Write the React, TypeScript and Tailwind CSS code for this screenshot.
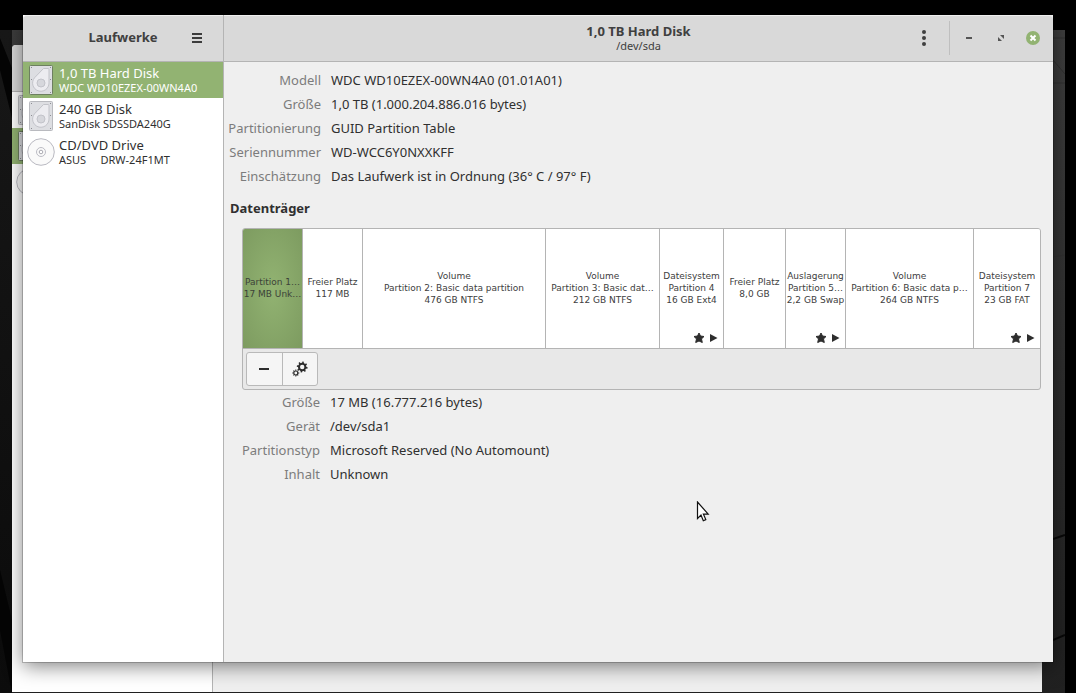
import React from 'react';

interface Drive {
  name: string;
  model: string;
  kind: 'disk' | 'optical';
}

interface Volume {
  size: number;
  lines: string[];
  mounted?: boolean;
}

const drives: Drive[] = [
  { name: '1,0 TB Hard Disk', model: 'WDC WD10EZEX-00WN4A0', kind: 'disk' },
  { name: '240 GB Disk', model: 'SanDisk SDSSDA240G', kind: 'disk' },
  { name: 'CD/DVD Drive', model: 'ASUS     DRW-24F1MT', kind: 'optical' },
];

const driveInfo: [string, string][] = [
  ['Modell', 'WDC WD10EZEX-00WN4A0 (01.01A01)'],
  ['Größe', '1,0 TB (1.000.204.886.016 bytes)'],
  ['Partitionierung', 'GUID Partition Table'],
  ['Seriennummer', 'WD-WCC6Y0NXXKFF'],
  ['Einschätzung', 'Das Laufwerk ist in Ordnung (36° C / 97° F)'],
];

const volumeInfo: [string, string][] = [
  ['Größe', '17 MB (16.777.216 bytes)'],
  ['Gerät', '/dev/sda1'],
  ['Partitionstyp', 'Microsoft Reserved (No Automount)'],
  ['Inhalt', 'Unknown'],
];

// size is the relative width of the volume in the grid
const volumes: Volume[] = [
  { size: 60, lines: ['Partition 1…', '17 MB Unk…'] },
  { size: 60, lines: ['Freier Platz', '117 MB'] },
  { size: 183, lines: ['Volume', 'Partition 2: Basic data partition', '476 GB NTFS'] },
  { size: 114, lines: ['Volume', 'Partition 3: Basic dat…', '212 GB NTFS'] },
  { size: 64, lines: ['Dateisystem', 'Partition 4', '16 GB Ext4'], mounted: true },
  { size: 62, lines: ['Freier Platz', '8,0 GB'] },
  { size: 60, lines: ['Auslagerung', 'Partition 5…', '2,2 GB Swap'], mounted: true },
  { size: 128, lines: ['Volume', 'Partition 6: Basic data p…', '264 GB NTFS'] },
  { size: 66, lines: ['Dateisystem', 'Partition 7', '23 GB FAT'], mounted: true },
];

const DiskIcon: React.FC<{ selected?: boolean }> = ({ selected }) => (
  <svg width="28" height="32" viewBox="0 0 28 32" className="shrink-0" aria-hidden="true">
    <rect x="2.5" y="1.5" width="23" height="29" rx="1" fill="#dddee2" stroke={selected ? '#6d7f60' : '#b9babf'} />
    <path
      d="M16.500 4.500h4.500q1 0 1 1V19a8.200 8.200 0 1 1-14.500-5.200z"
      fill="#ececf0"
      stroke="#c2c3c9"
      strokeLinejoin="round"
    />
    <circle cx="14" cy="19" r="4" fill="#d6d7dc" stroke="#c2c3c9" />
    <path d="M4 3h1v1H4zM23 3h1v1h-1zM4 15h1v1H4zM23 15h1v1h-1zM4 28h1v1H4zM23 28h1v1h-1z" fill="#8d8e94" />
  </svg>
);

const OpticalIcon: React.FC = () => (
  <svg width="28" height="28" viewBox="0 0 28 28" className="shrink-0" aria-hidden="true">
    <circle cx="14" cy="14" r="13.300" fill="#fafafa" stroke="#b9b9c1" />
    <circle cx="14" cy="14" r="4.500" fill="none" stroke="#bcbcc4" />
    <circle cx="14" cy="14" r="1.800" fill="#fff" stroke="#aaaab2" />
  </svg>
);

const gearTeeth = [0, 45, 90, 135, 180, 225, 270, 315];

const GearsIcon: React.FC = () => (
  <svg width="16" height="16" viewBox="0 0 16 16" stroke="#2d2d2d" fill="none" aria-hidden="true">
    <circle cx="10.200" cy="6" r="3.200" strokeWidth="2" />
    <circle cx="3.800" cy="12" r="2" strokeWidth="1.200" />
    {gearTeeth.map((a) => (
      <g key={a}>
        <path d="M10.200 2.500V.6" strokeWidth="1.600" transform={`rotate(${a + 10} 10.200 6)`} />
        <path d="M3.800 9.800V8.500" strokeWidth="1" transform={`rotate(${a} 3.800 12)`} />
      </g>
    ))}
  </svg>
);

const MountedIcons: React.FC = () => (
  <svg width="26" height="12" viewBox="0 0 26 12" fill="#2d2d2d" className="absolute right-1 bottom-1" aria-hidden="true">
    <path
      d="M6 1l1.500 3 3.500.5-2.500 2.400.8 3.600L6 9l-3.300 1.500.8-3.600L1 4.500 4.500 4z"
      stroke="#2d2d2d"
      strokeLinejoin="round"
    />
    <path d="M17 2l7.500 4-7.500 4z" />
  </svg>
);

const InfoList: React.FC<{ rows: [string, string][]; narrow?: boolean }> = ({ rows, narrow }) => (
  <dl
    className={
      narrow
        ? 'ml-3 grid grid-cols-[78px_1fr] gap-x-[10px] text-[13px] leading-6'
        : 'grid grid-cols-[91px_1fr] gap-x-[10px] text-[13px] leading-6'
    }
  >
    {rows.map(([label, value]) => (
      <React.Fragment key={label}>
        <dt className="flex justify-end whitespace-nowrap text-[#7c7c7c]">{label}</dt>
        <dd className="whitespace-nowrap">{value}</dd>
      </React.Fragment>
    ))}
  </dl>
);

// The second window, only its edges look out from behind the main one
const BackWindow: React.FC = () => (
  <div className="absolute top-[45px] right-[34px] bottom-px left-3 flex flex-col overflow-hidden rounded-t bg-[#efefef]">
    <div className="h-[47px] border-b border-[#b4b4b4] bg-[#d9d9d9]" />
    <div className="flex grow">
      <div className="w-[201px] border-r border-[#b4b4b4] bg-white">
        <div className="flex h-9 items-center pl-1">
          <DiskIcon />
        </div>
        <div className="flex h-9 items-center bg-[#92b372] pl-1">
          <DiskIcon selected />
        </div>
        <div className="flex h-9 items-center pl-1">
          <OpticalIcon />
        </div>
      </div>
    </div>
  </div>
);

const Sidebar: React.FC = () => (
  <aside className="flex w-[201px] shrink-0 flex-col border-r border-[#b4b4b4] bg-white">
    <header className="grid h-[47px] grid-cols-[1fr_auto_1fr] items-center rounded-tl border-t border-b border-t-[#efefef] border-b-[#b4b4b4] bg-[#d9d9d9] px-2 pb-px">
      <span />
      <h1 className="text-[13px] font-bold text-[#404040]">Laufwerke</h1>
      <button type="button" aria-label="Menü" className="flex h-8 w-9 items-center justify-center justify-self-end">
        <svg width="10" height="10" viewBox="0 0 10 10" fill="#3c3c3c" aria-hidden="true">
          <path d="M0 0h10v2H0zM0 4h10v2H0zM0 8h10v2H0z" />
        </svg>
      </button>
    </header>
    <nav>
      {drives.map((drive, i) => (
        <button
          type="button"
          key={drive.name}
          className={
            i === 0
              ? 'flex h-9 w-full items-center gap-1 bg-[#92b372] pl-1 text-left text-white'
              : 'flex h-9 w-full items-center gap-1 pl-1 text-left text-[#303030]'
          }
        >
          {drive.kind === 'disk' ? <DiskIcon selected={i === 0} /> : <OpticalIcon />}
          <span className="flex flex-col pb-[2px] whitespace-pre">
            <span className="text-[13px] leading-4">{drive.name}</span>
            <span className="text-[11px] leading-[13px]">{drive.model}</span>
          </span>
        </button>
      ))}
    </nav>
  </aside>
);

const TitleBar: React.FC = () => (
  <header className="grid h-[47px] grid-cols-[1fr_auto_1fr] items-center rounded-tr border-t border-b border-t-[#efefef] border-b-[#b4b4b4] bg-[#d9d9d9] pb-px text-[#404040]">
    <span />
    <div className="pb-px text-center">
      <h2 className="text-[13px] leading-4 font-bold">1,0 TB Hard Disk</h2>
      <p className="text-[11px] leading-[13px]">/dev/sda</p>
    </div>
    <div className="flex items-center justify-self-end pr-1">
      <button type="button" aria-label="Laufwerksoptionen" className="mr-[9px] flex h-8 w-8 items-center justify-center">
        <svg width="4" height="16" viewBox="0 0 4 16" fill="#404040" aria-hidden="true">
          <circle cx="2" cy="2" r="2" />
          <circle cx="2" cy="8" r="2" />
          <circle cx="2" cy="14" r="2" />
        </svg>
      </button>
      <div className="mr-[3px] h-[34px] w-px bg-[#bfbfbf]" />
      <button type="button" aria-label="Minimieren" className="flex h-8 w-8 items-center justify-center">
        <svg width="6" height="2" viewBox="0 0 6 2" fill="#555" aria-hidden="true">
          <path d="M0 0h6v2H0z" />
        </svg>
      </button>
      <button type="button" aria-label="Wiederherstellen" className="flex h-8 w-8 items-center justify-center">
        <svg width="6" height="6" viewBox="0 0 6 6" fill="#555" aria-hidden="true">
          <path d="M2 0h4v4zM0 2l4 4H0z" />
        </svg>
      </button>
      <button type="button" aria-label="Schließen" className="flex h-8 w-8 items-center justify-center">
        <svg width="14" height="14" viewBox="0 0 14 14" aria-hidden="true">
          <circle cx="7" cy="7" r="7" fill="#92b372" />
          <path d="M4.500 4.500l5 5M9.500 4.500l-5 5" stroke="#fff" strokeWidth="2" />
        </svg>
      </button>
    </div>
  </header>
);

const VolumeGrid: React.FC = () => (
  <div className="mr-[6px] ml-3 overflow-hidden rounded-[3px] border border-[#b4b4b4] bg-[#e8e8e8]">
    <div
      className="grid h-[120px] border-b border-[#b4b4b4]"
      style={{ gridTemplateColumns: volumes.map((volume) => `minmax(0, ${volume.size}fr)`).join(' ') }}
    >
      {volumes.map((volume, i) => (
        <button
          type="button"
          key={i}
          className={
            i === 0
              ? 'relative flex flex-col items-center justify-center overflow-hidden border-r border-[#b4b4b4] bg-radial from-[#92b372] to-[#7d9b60] pb-[2px] text-[#3c4238]'
              : 'relative flex flex-col items-center justify-center overflow-hidden border-r border-[#b4b4b4] bg-white pb-[2px] text-[#404040] last:border-r-0'
          }
        >
          {volume.lines.map((line) => (
            <span key={line} className="font-['DejaVu_Sans',sans-serif] text-[9px] leading-3 whitespace-nowrap">
              {line}
            </span>
          ))}
          {volume.mounted && <MountedIcons />}
        </button>
      ))}
    </div>
    <div className="flex h-10 px-[3px] py-[3px]">
      <div className="flex w-[72px] overflow-hidden rounded-[3px] border border-[#b9b9b9] bg-[#f5f5f5]">
        <button
          type="button"
          aria-label="Partition löschen"
          className="flex flex-1 items-center justify-center border-r border-[#b9b9b9]"
        >
          <svg width="10" height="2" viewBox="0 0 10 2" fill="#2d2d2d" aria-hidden="true">
            <path d="M0 0h10v2H0z" />
          </svg>
        </button>
        <button type="button" aria-label="Weitere Aktionen" className="flex flex-1 items-center justify-center">
          <GearsIcon />
        </button>
      </div>
    </div>
  </div>
);

const App: React.FC = () => {
  return (
    <div className="relative flex min-h-screen overflow-hidden bg-black pt-[15px] pr-[23px] pb-[31px] pl-[23px] font-['Noto_Sans',sans-serif] text-[#303030]">
      <div className="absolute top-[30px] right-[11px] bottom-0 left-0 bg-linear-to-b from-[#3d3d3d] to-[#202020]">
        <div className="h-full w-3 bg-linear-to-b from-[#181818] to-[#0c0c0c]" />
        <svg width="12" height="663" viewBox="0 0 12 663" className="absolute top-0 right-0" aria-hidden="true">
          <path d="M0 8h12M0 30l12 14M0 53h12M0 227l12-2M0 302l12-4" stroke="#303030" />
          <path d="M0 509l12-4M0 610l12-5" stroke="#080808" strokeWidth="2" />
        </svg>
        <svg width="12" height="663" viewBox="0 0 12 663" className="absolute top-0 left-0" aria-hidden="true">
          <path d="M0 8l12 30v50L0 40zM0 540l12 50v73L0 600z" fill="#050505" />
        </svg>
      </div>
      <BackWindow />

      <div className="relative flex grow rounded-t shadow-[0_4px_20px_rgba(0,0,0,0.5),0_0_0_1px_rgba(0,0,0,0.2)]">
        <Sidebar />
        <div className="flex min-w-0 grow flex-col bg-[#efefef]">
          <TitleBar />
          <main className="p-[6px]">
            <InfoList rows={driveInfo} />
            <h3 className="my-2 text-[13px] leading-6 font-bold">Datenträger</h3>
            <VolumeGrid />
            <InfoList rows={volumeInfo} narrow />
          </main>
        </div>
      </div>

      <svg width="14" height="22" viewBox="0 0 14 22" className="absolute top-[501px] left-[696px]" aria-hidden="true">
        <path d="M1.500 1v16.500l3.500-3.400 2.300 5.600 2.500-1.100-2.400-5.500h4.800z" fill="#fff" stroke="#111" strokeWidth="1.200" />
      </svg>
    </div>
  );
};

export default App;
